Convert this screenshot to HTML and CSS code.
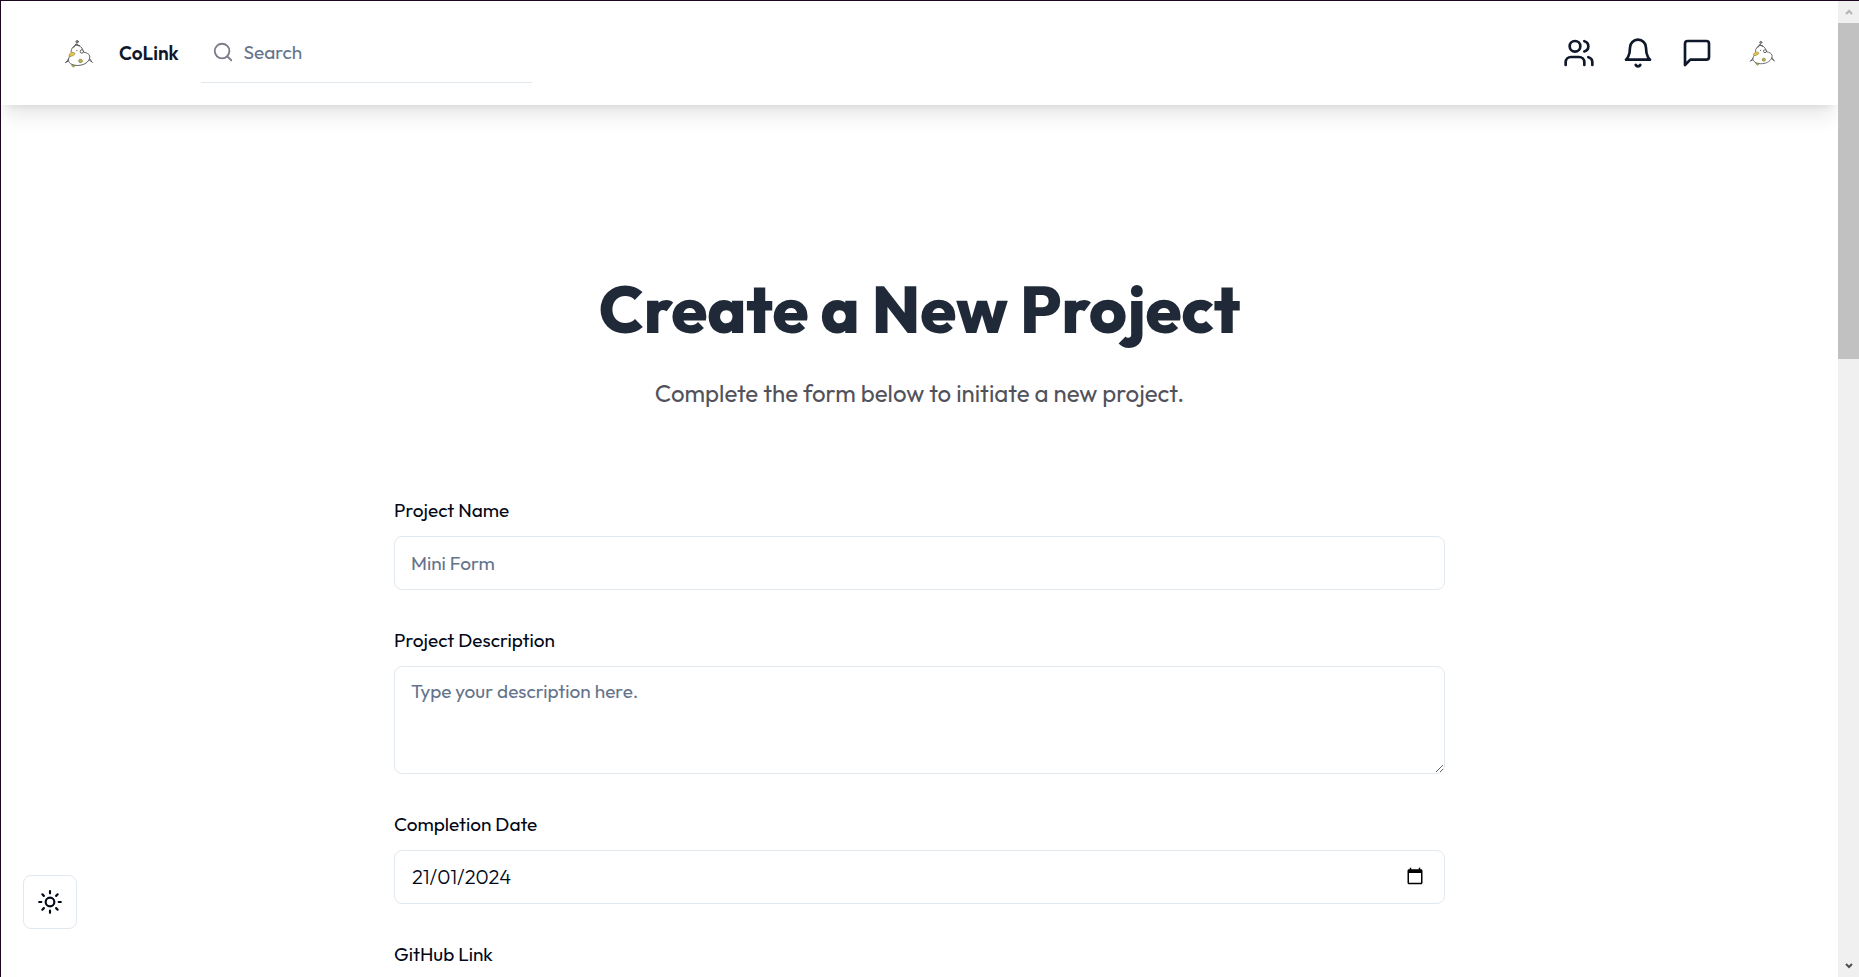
FILE: index.html
```html
<!DOCTYPE html>
<html lang="en">
<head>
    <meta charset="UTF-8">
    <meta name="viewport" content="width=device-width, initial-scale=1.0">
    <title>CoLink - Create a New Project</title>
    <link rel="stylesheet" href="styles.css">
</head>
<body>
    <svg class="sprite" aria-hidden="true">
        <symbol id="duck" viewBox="42 36 86 86">
            <g fill="none" stroke="#55555a" stroke-width="2.8" stroke-linecap="round" stroke-linejoin="round">
                <path d="M63 74C64 62 71 55 80 54C88 54 94 60 98 68"/>
                <path d="M71 61L79 50L86 57M76 52L88 56"/>
                <circle cx="81" cy="44" r="3.5" fill="#aaaaad"/>
                <path d="M62 86C54 90 53 100 58 106C65 114 82 117 98 112C112 107 120 96 118 86C116 80 110 77 101 75"/>
                <path d="M55 96L49 104M54 102L46 106M118 94L124 103M117 98L126 105"/>
                <circle cx="95" cy="73" r="5" fill="#fff"/>
                <path d="M80 70v1"/>
            </g>
            <path d="M57 86C58 78 65 73 73 77C78 80 70 87 57 88Z" fill="#eac642" stroke="#8b7b3d" stroke-width="2"/>
            <ellipse cx="91" cy="101" rx="5.5" ry="5" fill="#c5b340" stroke="#73763f" stroke-width="2"/>
            <path d="M64 113L75 115L70 120Z" fill="#d6bd3c" stroke="#73763f" stroke-width="2"/>
        </symbol>
    </svg>

    <div class="window">
        <div class="page">
            <header class="navbar">
                <a href="#" class="brand">
                    <svg class="logo" aria-hidden="true"><use href="#duck"/></svg>
                    <span>CoLink</span>
                </a>
                <div class="search">
                    <svg class="search-icon" viewBox="0 0 24 24" aria-hidden="true">
                        <circle cx="11" cy="11" r="8"/>
                        <path d="m21 21-4.3-4.3"/>
                    </svg>
                    <input type="search" placeholder="Search" aria-label="Search">
                </div>
                <nav class="nav-links">
                    <a href="#" aria-label="Connections">
                        <svg class="nav-icon" viewBox="0 0 24 24">
                            <path d="M16 21v-2a4 4 0 0 0-4-4H6a4 4 0 0 0-4 4v2"/>
                            <circle cx="9" cy="7" r="4"/>
                            <path d="M22 21v-2a4 4 0 0 0-3-3.87"/>
                            <path d="M16 3.13a4 4 0 0 1 0 7.75"/>
                        </svg>
                    </a>
                    <a href="#" aria-label="Notifications">
                        <svg class="nav-icon" viewBox="0 0 24 24">
                            <path d="M6 8a6 6 0 0 1 12 0c0 7 3 9 3 9H3s3-2 3-9"/>
                            <path d="M10.3 21a1.94 1.94 0 0 0 3.4 0"/>
                        </svg>
                    </a>
                    <a href="#" aria-label="Messages">
                        <svg class="nav-icon" viewBox="0 0 24 24">
                            <path d="M21 15a2 2 0 0 1-2 2H7l-4 4V5a2 2 0 0 1 2-2h14a2 2 0 0 1 2 2z"/>
                        </svg>
                    </a>
                    <button type="button" class="avatar" aria-label="Account">
                        <svg aria-hidden="true"><use href="#duck"/></svg>
                    </button>
                </nav>
            </header>

            <main class="content">
                <h1>Create a New Project</h1>
                <p class="subtitle">Complete the form below to initiate a new project.</p>

                <form class="project-form">
                    <div class="field">
                        <label for="project-name">Project Name</label>
                        <input type="text" id="project-name" class="control" placeholder="Mini Form">
                    </div>
                    <div class="field">
                        <label for="description">Project Description</label>
                        <textarea id="description" class="control" placeholder="Type your description here."></textarea>
                    </div>
                    <div class="field">
                        <label for="completion-date">Completion Date</label>
                        <div class="control date-control">
                            <input type="text" id="completion-date" value="21/01/2024">
                            <button type="button" aria-label="Open calendar">
                                <svg viewBox="0 0 24 24">
                                    <path d="M20 3h-1V1h-2v2H7V1H5v2H4c-1.1 0-2 .9-2 2v16c0 1.1.9 2 2 2h16c1.1 0 2-.9 2-2V5c0-1.1-.9-2-2-2zm0 18H4V8h16v13z"/>
                                </svg>
                            </button>
                        </div>
                    </div>
                    <div class="field">
                        <label for="github-link">GitHub Link</label>
                        <input type="url" id="github-link" class="control">
                    </div>
                </form>
            </main>

            <button type="button" class="theme-toggle" aria-label="Toggle theme">
                <svg viewBox="0 0 24 24">
                    <circle cx="12" cy="12" r="4"/>
                    <path d="M12 2v2M12 20v2M4.93 4.93l1.41 1.41M17.66 17.66l1.41 1.41M2 12h2M20 12h2M6.34 17.66l-1.41 1.41M19.07 4.93l-1.41 1.41"/>
                </svg>
            </button>
        </div>

        <div class="scrollbar" aria-hidden="true">
            <svg class="arrow arrow-up" viewBox="0 0 8 6"><path d="M1 5L4 2L7 5"/></svg>
            <div class="track"><div class="thumb"></div></div>
            <svg class="arrow" viewBox="0 0 8 6"><path d="M1 1L4 4L7 1"/></svg>
        </div>
    </div>
</body>
</html>
```

FILE: styles.css
```css
* {
    box-sizing: border-box;
}

body {
    margin: 0;
    font-family: Outfit, Lato, sans-serif;
    font-size: 19px;
    color: #020817;
    background-color: white;
}

input,
textarea,
button {
    font: inherit;
    color: inherit;
}

button {
    padding: 0;
    border: none;
    background: none;
    cursor: pointer;
}

svg {
    display: block;
}

.sprite {
    display: none;
}

.window {
    display: flex;
    height: 100vh;
    overflow: hidden;
    border-top: 1px solid #1d0620;
    border-left: 1px solid #1d0620;
}

.page {
    position: relative;
    flex: 1;
    overflow: hidden;
}

/* Navbar */
.navbar {
    display: flex;
    align-items: center;
    height: 104px;
    padding: 0 63px;
    box-shadow: 0 14px 20px -4px rgba(0, 0, 0, 0.1), 0 5px 8px -5px rgba(0, 0, 0, 0.1);
}

.brand {
    display: flex;
    align-items: center;
    gap: 26px;
    color: #0f172a;
    font-weight: 600;
    text-decoration: none;
}

.logo {
    width: 29px;
    height: 29px;
}

.search {
    display: flex;
    align-items: center;
    gap: 10px;
    width: 331px;
    height: 60px;
    margin: 0 auto 0 22px;
    padding: 0 11px 2px;
    border-bottom: 1px solid #e2e8f0;
}

.search-icon {
    width: 22px;
    height: 22px;
    fill: none;
    stroke: #7c7d86;
    stroke-width: 2;
    stroke-linecap: round;
}

.search input {
    flex: 1;
    min-width: 0;
    padding: 0;
    border: none;
    outline: none;
    background: none;
}

::placeholder {
    color: #64748b;
    opacity: 1;
}

.nav-links {
    display: flex;
    align-items: center;
    gap: 27px;
}

.nav-icon {
    width: 32px;
    height: 32px;
    fill: none;
    stroke: #0f172a;
    stroke-width: 2;
    stroke-linecap: round;
    stroke-linejoin: round;
}

.avatar {
    padding: 0 0 0 9px;
}

.avatar svg {
    width: 26px;
    height: 26px;
}

/* Form */
.content {
    max-width: 1051px;
    margin: 0 auto;
    padding-top: 172px;
}

h1 {
    margin: 0;
    color: #1f2937;
    font-size: 65px;
    font-weight: 800;
    line-height: 65px;
    text-align: center;
}

.subtitle {
    margin: 33px 0 87px;
    color: #52525b;
    font-size: 24px;
    line-height: 36px;
    text-align: center;
}

.project-form {
    display: flex;
    flex-direction: column;
    gap: 38px;
}

.field {
    display: flex;
    flex-direction: column;
    gap: 14px;
}

.field label {
    line-height: 24px;
}

.control {
    display: block;
    width: 100%;
    height: 54px;
    padding: 0 16px;
    border: 1px solid #e2e8f0;
    border-radius: 8px;
    background-color: white;
}

textarea.control {
    height: 108px;
    padding: 11px 16px;
    line-height: 26px;
    resize: vertical;
}

.date-control {
    display: flex;
    align-items: center;
    padding: 0 20px 2px 17px;
}

.date-control input {
    flex: 1;
    min-width: 0;
    padding: 0;
    border: none;
    outline: none;
    font-size: 20px;
    font-weight: 300;
}

.date-control svg {
    width: 18px;
    height: 18px;
}

.theme-toggle {
    position: absolute;
    left: 22px;
    bottom: 48px;
    display: flex;
    align-items: center;
    justify-content: center;
    width: 54px;
    height: 54px;
    border: 1px solid #e2e8f0;
    border-radius: 8px;
    background-color: white;
}

.theme-toggle svg {
    width: 26px;
    height: 26px;
    fill: none;
    stroke: #020817;
    stroke-width: 2;
    stroke-linecap: round;
}

/* Scrollbar */
.scrollbar {
    display: flex;
    flex-direction: column;
    align-items: center;
    width: 21px;
    background-color: #f0f0f0;
}

.arrow {
    width: 8px;
    height: 22px;
    fill: none;
    stroke: #505050;
    stroke-width: 2;
}

.arrow-up {
    stroke: #b5b5b5;
}

.track {
    flex: 1;
    width: 100%;
}

.thumb {
    height: 36%;
    background-color: #c1c1c1;
}
```
